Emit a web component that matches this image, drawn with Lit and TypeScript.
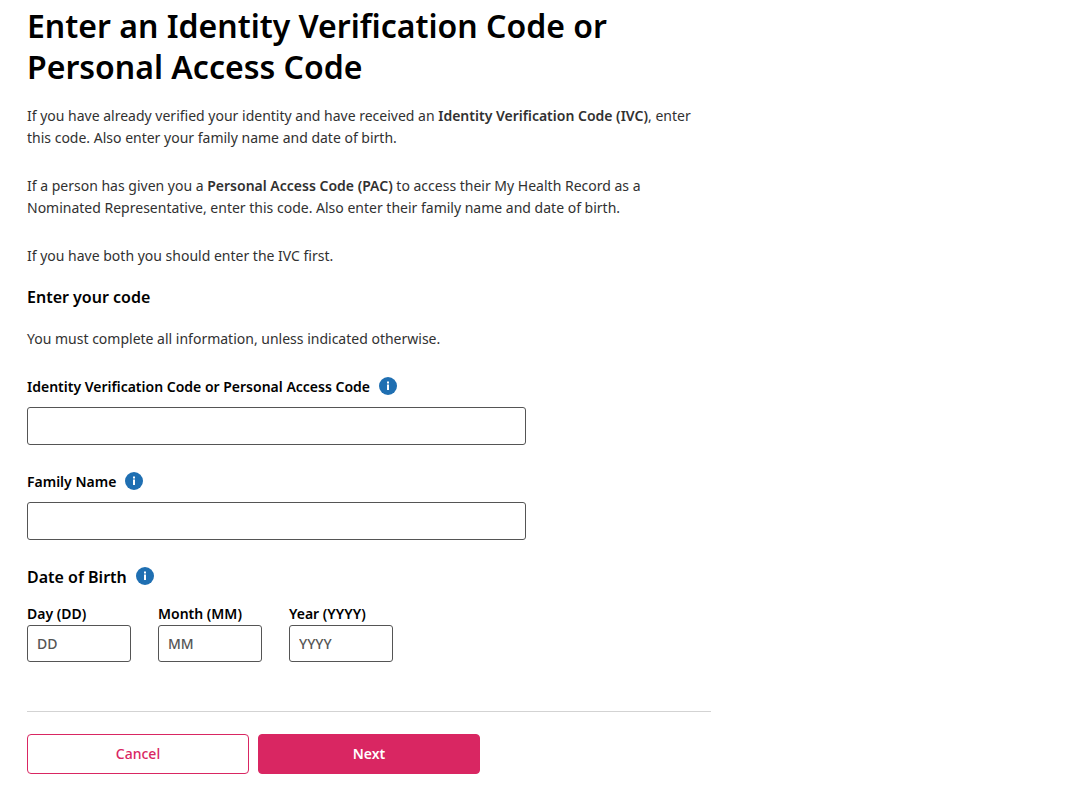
import { LitElement, html, css } from "lit";
import { customElement } from "lit/decorators.js";

@customElement("info-button")
class InfoButton extends LitElement {
  static styles = css`
    :host { display: inline-flex; }
    button { display: flex; padding: 0 0 2px; border: 0; background: none; cursor: pointer; }
    svg { display: block; width: 18px; height: 18px; }
  `;
  render() {
    return html`<button type="button" aria-label="More information">
      <svg viewBox="0 0 18 18" aria-hidden="true">
        <circle cx="9" cy="9" r="9" fill="#1f6fb2" />
        <path d="M8 4.5h2v2H8zM8 7.5h2v5.5H8z" fill="#fff" />
      </svg>
    </button>`;
  }
}

@customElement("app-root")
class AppRoot extends LitElement {
  static styles = css`
    :host {
      display: block;
      box-sizing: border-box;
      padding: 5px 27px 16px;
      font: 14px/22px "Noto Sans", "Open Sans", sans-serif;
      color: #313131;
    }
    main { max-width: 684px; }
    h1, h2, p, fieldset, legend { margin: 0; padding: 0; border: 0; }
    h1 { margin-bottom: 18px; font-size: 32px; line-height: 41px; font-weight: 600; color: #000; }
    .intro { display: grid; gap: 26px; }
    strong { font-weight: 600; }
    h2 { margin: 19px 0 20px; font-size: 16px; line-height: 22px; font-weight: 600; color: #000; }
    form { margin-top: 26px; }
    .field { margin-bottom: 26px; }
    .label { display: flex; align-items: center; gap: 9px; margin-bottom: 9px; }
    label { font-weight: 600; color: #000; }
    input {
      display: block;
      box-sizing: border-box;
      width: 100%;
      height: 38px;
      padding: 0 9px;
      border: 1px solid #555;
      border-radius: 3px;
      background: #fff;
      font: inherit;
      font-weight: 500;
    }
    input::placeholder { color: #555; opacity: 1; }
    .wide { max-width: 499px; }
    legend { display: flex; align-items: center; gap: 9px; margin-bottom: 15px; font-size: 16px; font-weight: 600; color: #000; }
    .dates { display: flex; gap: 27px; }
    .date { width: 104px; }
    .date input { height: 37px; }
    .date label { white-space: nowrap; }
    .actions { display: flex; gap: 9px; margin-top: 49px; padding-top: 22px; border-top: 1px solid #d3d3d3; }
    .actions button {
      width: 222px;
      height: 40px;
      border: 1px solid #d92662;
      border-radius: 4px;
      font: inherit;
      font-weight: 500;
      cursor: pointer;
    }
    .actions .cancel { background: #fff; color: #d92662; }
    .actions .next { background: #d92662; color: #fff; font-weight: 600; }
  `;
  render() {
    return html`<main>
      <h1>Enter an Identity Verification Code or Personal Access Code</h1>
      <div class="intro">
        <p>If you have already verified your identity and have received an <strong>Identity Verification Code (IVC)</strong>, enter this code. Also enter your family name and date of birth.</p>
        <p>If a person has given you a <strong>Personal Access Code (PAC)</strong> to access their My Health Record as a Nominated Representative, enter this code. Also enter their family name and date of birth.</p>
        <p>If you have both you should enter the IVC first.</p>
      </div>
      <h2>Enter your code</h2>
      <p>You must complete all information, unless indicated otherwise.</p>
      <form>
        <div class="field">
          <div class="label"><label for="code">Identity Verification Code or Personal Access Code</label><info-button></info-button></div>
          <input class="wide" id="code" type="text" />
        </div>
        <div class="field">
          <div class="label"><label for="family">Family Name</label><info-button></info-button></div>
          <input class="wide" id="family" type="text" />
        </div>
        <fieldset>
          <legend>Date of Birth<info-button></info-button></legend>
          <div class="dates">
            <div class="date"><label for="day">Day (DD)</label><input id="day" type="text" inputmode="numeric" placeholder="DD" /></div>
            <div class="date"><label for="month">Month (MM)</label><input id="month" type="text" inputmode="numeric" placeholder="MM" /></div>
            <div class="date"><label for="year">Year (YYYY)</label><input id="year" type="text" inputmode="numeric" placeholder="YYYY" /></div>
          </div>
        </fieldset>
        <div class="actions">
          <button class="cancel" type="button">Cancel</button>
          <button class="next" type="button">Next</button>
        </div>
      </form>
    </main>`;
  }
}
